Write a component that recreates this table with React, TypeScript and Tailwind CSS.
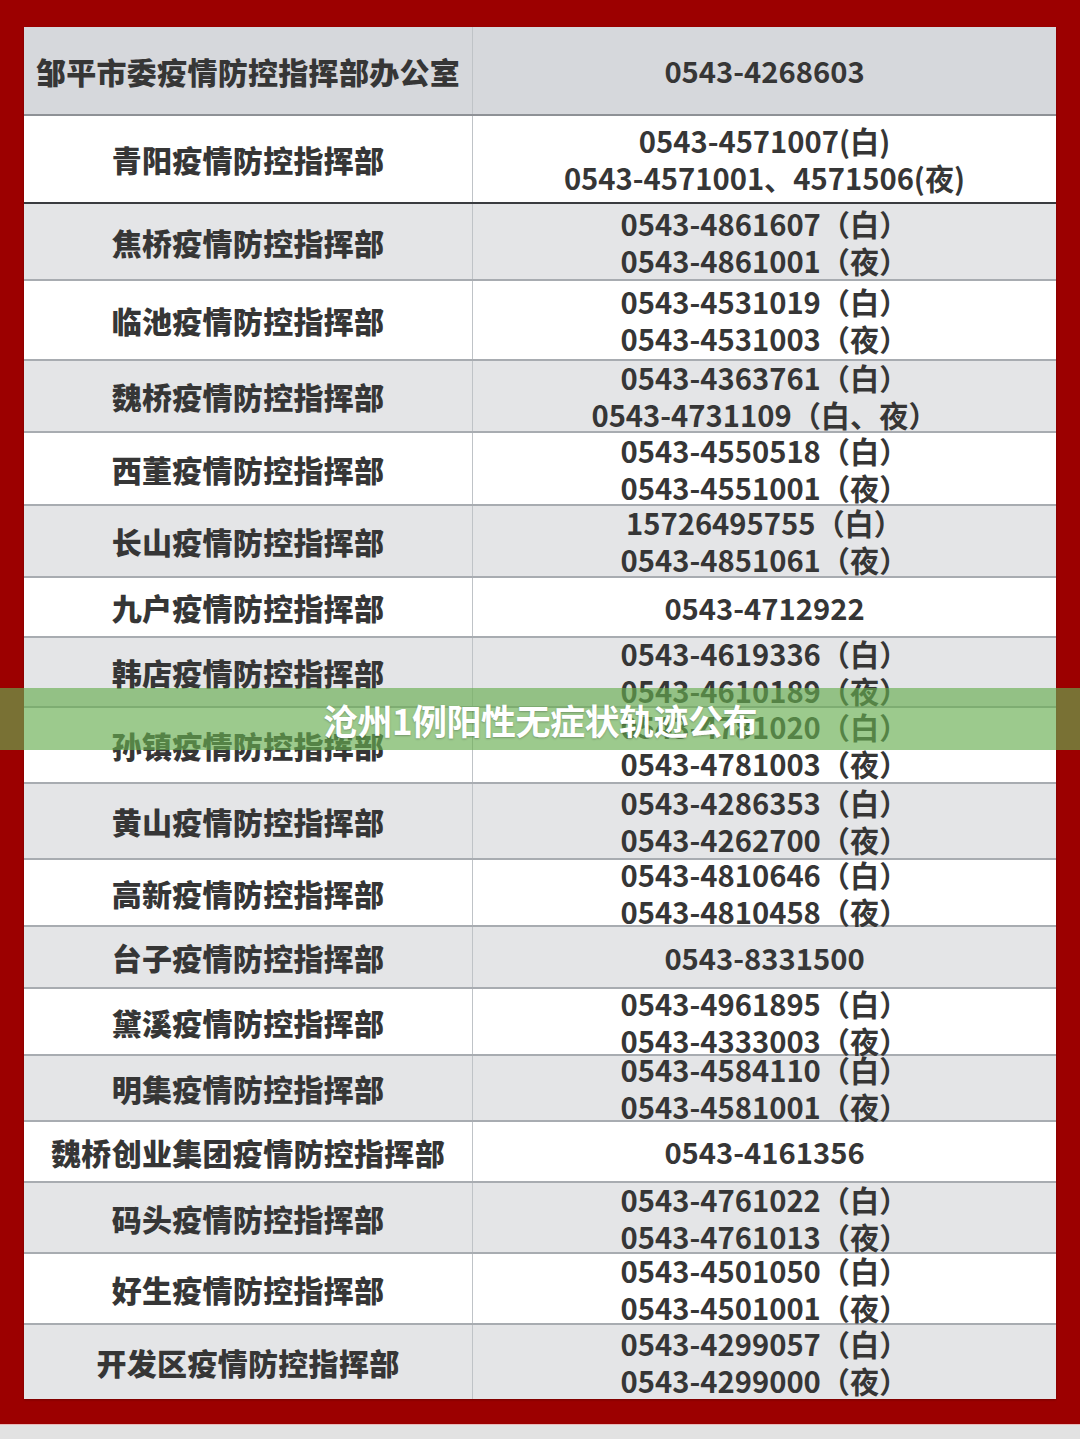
import React from "react";

type Row = { name: string; lines: string[]; h: string; bg: string; border: string };

const G = "bg-[#e4e5e7]";
const W = "bg-white";
const B = "border-b-2 border-[#a8acb1]";

const rows: Row[] = [
  { name: "邹平市委疫情防控指挥部办公室", lines: ["0543-4268603"], h: "h-[89px]", bg: "bg-[#d6d8dc]", border: "border-b-2 border-[#8e9196]" },
  { name: "青阳疫情防控指挥部", lines: ["0543-4571007(白)", "0543-4571001、4571506(夜)"], h: "h-[88px]", bg: W, border: "border-b-2 border-[#3a3c40]" },
  { name: "焦桥疫情防控指挥部", lines: ["0543-4861607（白）", "0543-4861001（夜）"], h: "h-[77px]", bg: G, border: B },
  { name: "临池疫情防控指挥部", lines: ["0543-4531019（白）", "0543-4531003（夜）"], h: "h-[80px]", bg: W, border: B },
  { name: "魏桥疫情防控指挥部", lines: ["0543-4363761（白）", "0543-4731109（白、夜）"], h: "h-[72px]", bg: G, border: B },
  { name: "西董疫情防控指挥部", lines: ["0543-4550518（白）", "0543-4551001（夜）"], h: "h-[73px]", bg: W, border: B },
  { name: "长山疫情防控指挥部", lines: ["15726495755（白）", "0543-4851061（夜）"], h: "h-[72px]", bg: G, border: B },
  { name: "九户疫情防控指挥部", lines: ["0543-4712922"], h: "h-[60px]", bg: W, border: B },
  { name: "韩店疫情防控指挥部", lines: ["0543-4619336（白）", "0543-4610189（夜）"], h: "h-[70px]", bg: G, border: B },
  { name: "孙镇疫情防控指挥部", lines: ["0543-4781020（白）", "0543-4781003（夜）"], h: "h-[76px]", bg: W, border: B },
  { name: "黄山疫情防控指挥部", lines: ["0543-4286353（白）", "0543-4262700（夜）"], h: "h-[76px]", bg: G, border: B },
  { name: "高新疫情防控指挥部", lines: ["0543-4810646（白）", "0543-4810458（夜）"], h: "h-[67px]", bg: W, border: B },
  { name: "台子疫情防控指挥部", lines: ["0543-8331500"], h: "h-[62px]", bg: G, border: B },
  { name: "黛溪疫情防控指挥部", lines: ["0543-4961895（白）", "0543-4333003（夜）"], h: "h-[67px]", bg: W, border: B },
  { name: "明集疫情防控指挥部", lines: ["0543-4584110（白）", "0543-4581001（夜）"], h: "h-[66px]", bg: G, border: B },
  { name: "魏桥创业集团疫情防控指挥部", lines: ["0543-4161356"], h: "h-[61px]", bg: W, border: B },
  { name: "码头疫情防控指挥部", lines: ["0543-4761022（白）", "0543-4761013（夜）"], h: "h-[71px]", bg: G, border: B },
  { name: "好生疫情防控指挥部", lines: ["0543-4501050（白）", "0543-4501001（夜）"], h: "h-[71px]", bg: W, border: B },
  { name: "开发区疫情防控指挥部", lines: ["0543-4299057（白）", "0543-4299000（夜）"], h: "h-[74px]", bg: G, border: "" },
];

const font = { fontFamily: '"Noto Sans CJK SC", "Noto Sans", sans-serif' };

export default function App() {
  return (
    <div className="relative w-[1080px] h-[1439px] bg-[#9c0000] overflow-hidden" style={font}>
      <div className="flex flex-col h-[1424px] pt-[27px] px-[24px]">
        <div className="flex flex-col w-[1032px] shadow-[0_1px_2px_rgba(0,0,0,0.25)]">
          {rows.map((r, i) => (
            <div key={i} className={`flex ${r.h} ${r.bg} ${r.border}`}>
              <div className="w-[449px] flex items-center justify-center border-r border-[#bfc3c7] text-[30px] font-black text-[#363636] tracking-[0.3px] leading-none">
                {r.name}
              </div>
              <div className="flex-1 flex flex-col items-center justify-center text-[29.2px] font-bold text-[#363636] leading-[37px]">
                {r.lines.map((l, j) => (
                  <div key={j}>{l}</div>
                ))}
              </div>
            </div>
          ))}
        </div>
      </div>
      <div className="h-[15px] bg-[#e2e2e2] border-t border-[#e8b8b8]" />
      <div className="absolute left-0 top-[688px] w-[1080px] h-[62px] bg-[rgba(103,174,80,0.65)] flex items-center justify-center">
        <span className="text-white text-[35px] font-bold leading-none tracking-[-0.5px] [text-shadow:0_1px_2px_rgba(0,0,0,0.25)]">
          沧州1例阳性无症状轨迹公布
        </span>
      </div>
    </div>
  );
}
